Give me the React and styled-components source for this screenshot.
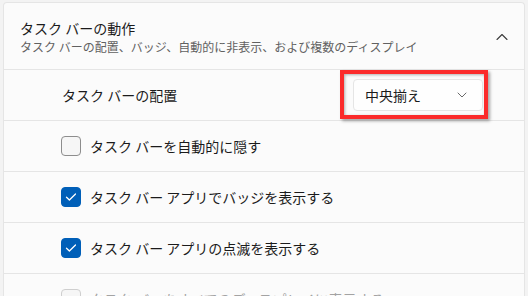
import React from "react";
import styled, { createGlobalStyle } from "styled-components";

const GlobalStyle = createGlobalStyle`
	body {
		margin: 0;
		background: #f3f3f3;
		font-family: "Noto Sans CJK JP", "Noto Sans", sans-serif;
		color: #1b1b1b;
	}
`;

const Card = styled.div`
	margin: 2px 3px 0 3px;
	border: 1px solid #e5e5e5;
	border-bottom: none;
	border-radius: 4px 4px 0 0;
	background: #fbfbfb;
	overflow: hidden;
`;

const Header = styled.div`
	display: flex;
	align-items: center;
	height: 66px;
	padding: 2px 16px 0 16px;
	box-sizing: border-box;
`;

const HeaderText = styled.div`
	flex: 1;
	display: flex;
	flex-direction: column;
	gap: 1px;
`;

const Title = styled.div`
	font-size: 14px;
	line-height: 19px;
`;

const Subtitle = styled.div`
	font-size: 12px;
	line-height: 16px;
	color: #616161;
`;

const Row = styled.div`
	display: flex;
	align-items: center;
	height: 50px;
	border-top: 1px solid #e5e5e5;
	padding: 0 41px 0 57px;
	gap: 9px;
`;

const Label = styled.span`
	flex: ${({ grow }) => (grow ? 1 : "none")};
	font-size: 14px;
	color: ${({ disabled }) => (disabled ? "#a3a3a3" : "#1b1b1b")};
	padding-left: ${({ indent }) => indent || 0}px;
`;

const Box = styled.span`
	display: flex;
	align-items: center;
	justify-content: center;
	width: 20px;
	height: 20px;
	box-sizing: border-box;
	border-radius: 4px;
	background: ${({ checked }) => (checked ? "#005fb8" : "#f6f6f6")};
	border: 1px solid
		${({ checked, disabled }) =>
			checked ? "#005fb8" : disabled ? "#cfcfcf" : "#8d8d8d"};
`;

const Select = styled.div`
	position: relative;
	display: flex;
	align-items: center;
	justify-content: space-between;
	width: 130px;
	height: 32px;
	box-sizing: border-box;
	padding: 0 15px 0 11px;
	border: 1px solid #e5e5e5;
	border-radius: 4px;
	background: #fefefe;
	font-size: 14px;
`;

const Highlight = styled.div`
	position: absolute;
	top: -10px;
	left: -14px;
	right: -6px;
	bottom: -9px;
	border: 4px solid #fb2b2b;
	box-shadow: 2px 2px 3px rgba(0, 0, 0, 0.35), inset 1px 1px 3px rgba(0, 0, 0, 0.3);
	pointer-events: none;
`;

const Chevron = ({ up }) => (
	<svg width="12" height="8" viewBox="0 0 12 8">
		<path
			d={up ? "M1 6.5 L6 1.5 L11 6.5" : "M1 1.5 L6 6.5 L11 1.5"}
			fill="none"
			stroke="#3b3b3b"
			strokeWidth="1.1"
			strokeLinecap="round"
			strokeLinejoin="round"
		/>
	</svg>
);

const SmallChevron = () => (
	<svg width="10" height="6" viewBox="0 0 10 6">
		<path
			d="M1 1 L5 5 L9 1"
			fill="none"
			stroke="#6a6a6a"
			strokeWidth="1"
			strokeLinecap="round"
			strokeLinejoin="round"
		/>
	</svg>
);

const Check = () => (
	<svg width="12" height="10" viewBox="0 0 12 10">
		<path
			d="M1.5 5.2 L4.4 8 L10.5 2"
			fill="none"
			stroke="#ffffff"
			strokeWidth="1.3"
			strokeLinecap="round"
			strokeLinejoin="round"
		/>
	</svg>
);

const CheckRow = ({ checked, disabled, children }) => (
	<Row>
		<Box checked={checked} disabled={disabled}>
			{checked && <Check />}
		</Box>
		<Label disabled={disabled}>{children}</Label>
	</Row>
);

const App = () => (
	<>
		<GlobalStyle />
		<Card>
			<Header>
				<HeaderText>
					<Title>タスク バーの動作</Title>
					<Subtitle>
						タスク バーの配置、バッジ、自動的に非表示、および複数のディスプレイ
					</Subtitle>
				</HeaderText>
				<Chevron up />
			</Header>
			<Row>
				<Label grow indent={1}>
					タスク バーの配置
				</Label>
				<Select>
					<span>中央揃え</span>
					<SmallChevron />
					<Highlight />
				</Select>
			</Row>
			<CheckRow>タスク バーを自動的に隠す</CheckRow>
			<CheckRow checked>タスク バー アプリでバッジを表示する</CheckRow>
			<CheckRow checked>タスク バー アプリの点滅を表示する</CheckRow>
			<CheckRow disabled>タスク バーをすべてのディスプレイに表示する</CheckRow>
		</Card>
	</>
);

export default App;
